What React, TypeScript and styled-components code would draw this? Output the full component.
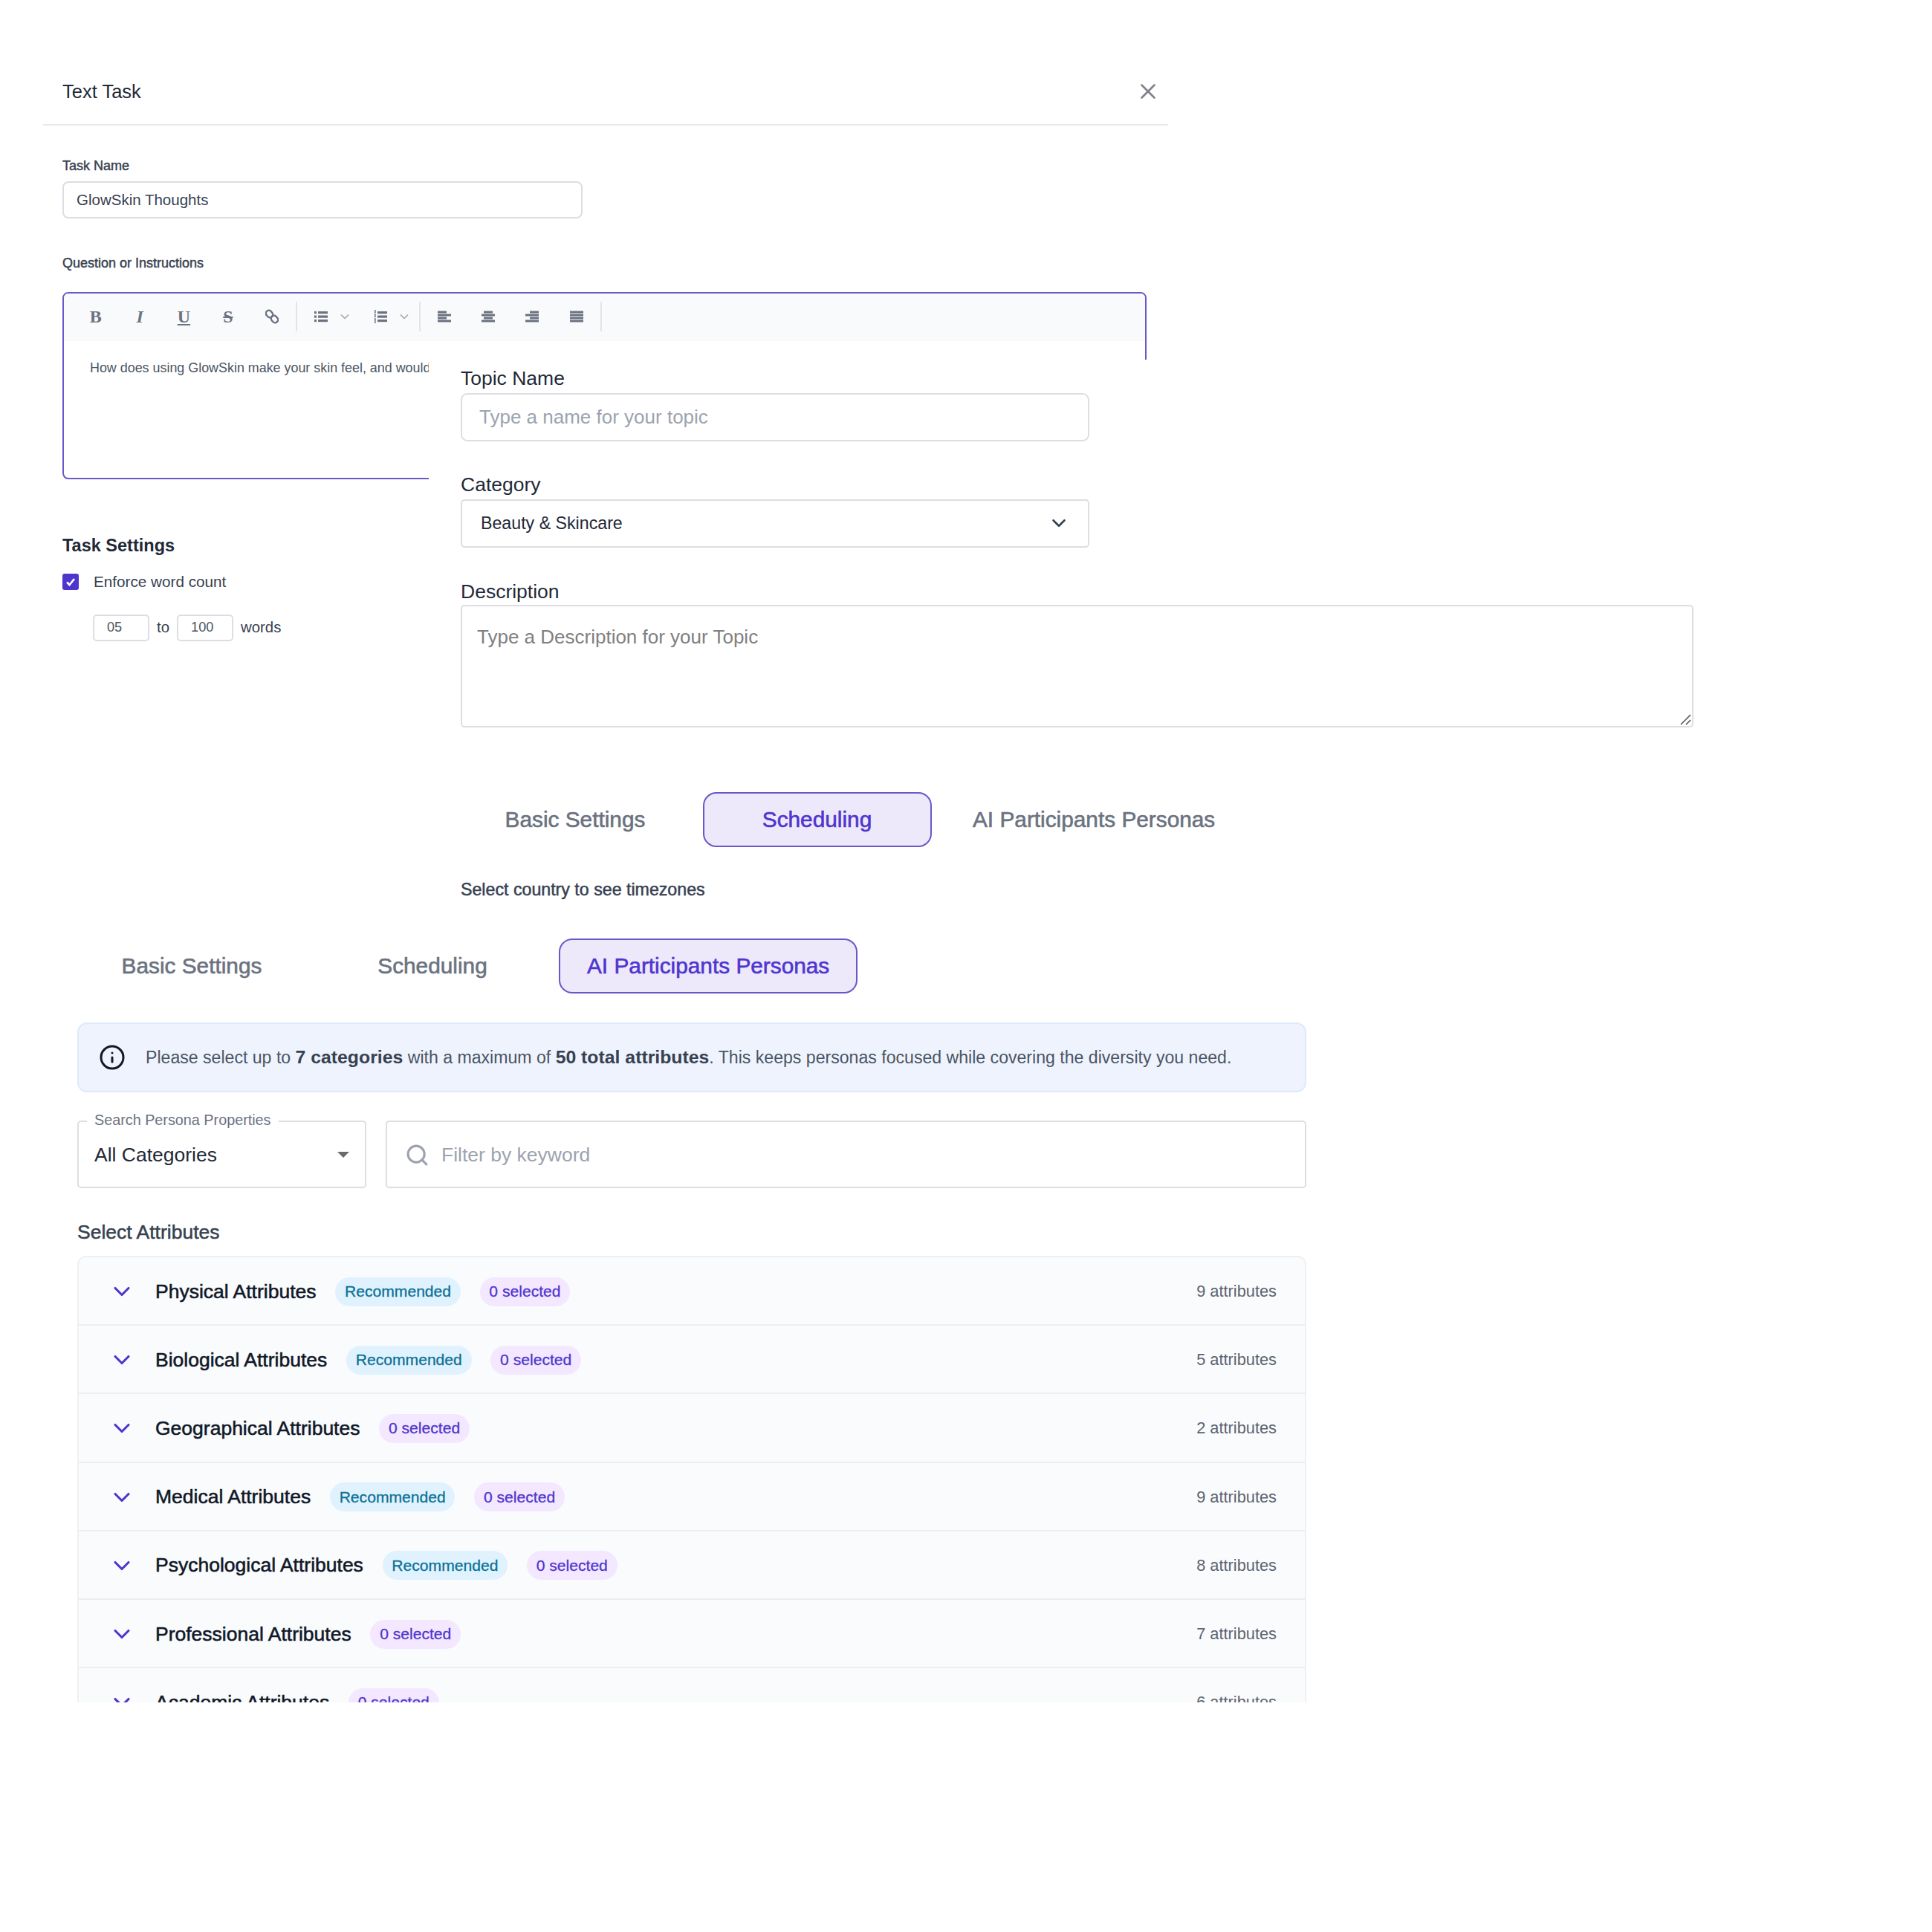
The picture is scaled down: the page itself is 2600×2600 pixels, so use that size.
import * as React from 'react'
import styled, { createGlobalStyle } from 'styled-components'
import { ChevronDown, Info, Search, X } from 'lucide-react'

const sans = `"Liberation Sans", Arial, sans-serif`

const GlobalStyle = createGlobalStyle`
  html, body {
    margin: 0;
    padding: 0;
    background: #ffffff;
    font-family: ${sans};
  }
  * {
    box-sizing: border-box;
  }
`

const Canvas = styled.div`
  position: relative;
  width: 2600px;
  height: 2600px;
  overflow: hidden;
  background: #ffffff;
  padding-top: 90px;
`

/* Text Task window */
const TaskWindow = styled.section`
  width: 1514px;
  height: 1150px;
  margin-left: 58px;
  background: #ffffff;
`

const TaskHeader = styled.header`
  display: flex;
  align-items: center;
  justify-content: space-between;
  height: 79px;
  padding: 0 10px 11px 26px;
  border-bottom: 2px solid #e8e9ec;
  font-size: 25.5px;
  color: #1f2937;
`

const CloseButton = styled.span`
  display: flex;
  color: #808389;
`

const TaskBody = styled.div`
  display: flex;
  flex-direction: column;
  padding: 0 29px 0 26px;
`

const SmallLabel = styled.div<{ $top: number }>`
  margin-top: ${({ $top }) => $top}px;
  font-size: 18px;
  line-height: 20px;
  -webkit-text-stroke: 0.45px currentColor;
  color: #374151;
`

const TaskNameInput = styled.div`
  width: 700px;
  height: 50px;
  margin-top: 11px;
  padding-left: 17px;
  display: flex;
  align-items: center;
  border: 2px solid #dcdee3;
  border-radius: 8px;
  font-size: 20.5px;
  color: #374151;
`

const Editor = styled.div`
  width: 1459px;
  height: 252px;
  margin-top: 29px;
  border: 2px solid #6a58c9;
  border-radius: 8px;
  overflow: hidden;
`

const EditorToolbar = styled.div`
  display: flex;
  align-items: center;
  height: 64px;
  padding: 0 0 2px 11px;
  background: #f9fafb;
  color: #6b7280;
`

const ToolGroup = styled.div`
  display: flex;
  align-items: center;
  height: 40px;
  padding: 0 2px;
  border-right: 2px solid #e2e4e8;
`

const ToolButton = styled.span<{ $wide?: boolean }>`
  display: flex;
  align-items: center;
  justify-content: ${({ $wide }) => ($wide ? 'flex-start' : 'center')};
  gap: 17px;
  width: ${({ $wide }) => ($wide ? '80px' : '59.4px')};
  padding-left: ${({ $wide }) => ($wide ? '21px' : '0')};
  font-family: "Liberation Serif", "Times New Roman", serif;
  font-size: 24px;
  font-weight: 700;
  line-height: 1;
`

const EditorText = styled.p`
  width: 491px;
  margin: 0;
  padding: 25px 0 0 35px;
  overflow: hidden;
  font-size: 17.9px;
  line-height: 22px;
  color: #4b5563;
  white-space: nowrap;
`

const SettingsTitle = styled.h3`
  margin: 75px 0 0;
  font-size: 23.5px;
  line-height: 28px;
  font-weight: 700;
  color: #1f2937;
`

const CheckRow = styled.label`
  display: flex;
  align-items: center;
  gap: 20px;
  margin-top: 23px;
  font-size: 20.7px;
  color: #374151;
`

const CheckBox = styled.span`
  display: flex;
  align-items: center;
  justify-content: center;
  width: 22px;
  height: 22px;
  border-radius: 3px;
  background: #4f35cf;
`

const RangeRow = styled.div`
  display: flex;
  align-items: center;
  gap: 10px;
  margin: 32px 0 0 41px;
  font-size: 20.4px;
  color: #374151;
`

const RangeInput = styled.span`
  display: flex;
  align-items: center;
  width: 76px;
  height: 36px;
  padding-left: 17px;
  border: 2px solid #dcdee3;
  border-radius: 5px;
  font-size: 18.2px;
  color: #4b5563;
`

/* Topic form and scheduling window, lies over the text task window */
const TopicWindow = styled.section`
  position: absolute;
  left: 577px;
  top: 484px;
  width: 1800px;
  height: 750px;
  padding: 0 0 0 43px;
  background: #ffffff;
`

const FieldLabel = styled.div<{ $top: number; $bottom: number }>`
  margin-top: ${({ $top }) => $top}px;
  margin-bottom: ${({ $bottom }) => $bottom}px;
  font-size: 26.5px;
  line-height: 30px;
  color: #1f2937;
`

const TextField = styled.div<{ $radius: number }>`
  display: flex;
  align-items: center;
  justify-content: space-between;
  width: 846px;
  height: 65px;
  padding: 0 24px 0 ${({ $radius }) => ($radius > 6 ? 23 : 25)}px;
  border: 2px solid #dcdee3;
  border-radius: ${({ $radius }) => $radius}px;
  font-size: ${({ $radius }) => ($radius > 6 ? 26 : 23.2)}px;
  color: ${({ $radius }) => ($radius > 6 ? '#9ca3af' : '#1f2937')};
`

const TextArea = styled.div`
  position: relative;
  width: 1659px;
  height: 165px;
  padding: 26px 0 0 20px;
  border: 2px solid #dcdee3;
  border-radius: 5px;
  font-size: 26px;
  line-height: 30px;
  color: #808080;
`

const ResizeGrip = styled.svg`
  position: absolute;
  right: 1px;
  bottom: 1px;
`

const TabRow = styled.div<{ $top: number; $gap: number }>`
  display: flex;
  gap: ${({ $gap }) => $gap}px;
  margin-top: ${({ $top }) => $top}px;
`

const Tab = styled.div<{ $active?: boolean }>`
  display: flex;
  align-items: center;
  justify-content: center;
  min-width: 308px;
  height: 74px;
  padding: 0 36px;
  border: 2px solid ${({ $active }) => ($active ? '#6a58c9' : 'transparent')};
  border-radius: 18px;
  background: ${({ $active }) => ($active ? '#ede9fb' : 'transparent')};
  font-size: 29.8px;
  -webkit-text-stroke: 0.6px currentColor;
  color: ${({ $active }) => ($active ? '#4f35cf' : '#6b7280')};
`

const CountryHint = styled.div`
  margin-top: 42.5px;
  font-size: 23.2px;
  line-height: 28px;
  -webkit-text-stroke: 0.5px currentColor;
  color: #374151;
`

/* AI personas window */
const PersonaWindow = styled.section`
  position: absolute;
  left: 104px;
  top: 1240px;
  width: 1654px;
  height: 1051px;
  padding-top: 23px;
  overflow: hidden;
  background: #ffffff;
`

const InfoBanner = styled.div`
  display: flex;
  align-items: center;
  gap: 27px;
  height: 94px;
  margin-top: 39px;
  padding-left: 27px;
  border: 2px solid #e0e9fb;
  border-radius: 13px;
  background: #eef3fe;
  font-size: 23.1px;
  color: #4b5563;

  svg {
    flex: none;
    color: #111827;
  }

  b {
    font-size: 24.8px;
    color: #374151;
  }
`

const SearchRow = styled.div`
  display: flex;
  gap: 26px;
  margin-top: 38px;
`

const OutlinedSelect = styled.div`
  position: relative;
  display: flex;
  align-items: center;
  justify-content: space-between;
  width: 389px;
  height: 91px;
  padding: 1px 21px 0;
  border: 2px solid #dcdee3;
  border-radius: 5px;
  font-size: 26.5px;
  color: #1f2937;
`

const FloatingLabel = styled.span`
  position: absolute;
  left: 11px;
  top: -14px;
  padding: 0 10px;
  background: #ffffff;
  font-size: 19.8px;
  line-height: 22px;
  color: #6b7280;
`

const Caret = styled.span`
  width: 0;
  height: 0;
  border-left: 8px solid transparent;
  border-right: 8px solid transparent;
  border-top: 8px solid #6b6b6b;
`

const KeywordField = styled.div`
  flex: 1;
  display: flex;
  align-items: center;
  gap: 16px;
  height: 91px;
  padding: 1px 0 0 24px;
  border: 2px solid #dcdee3;
  border-radius: 5px;
  font-size: 26.5px;
  color: #9ca3af;

  svg {
    color: #9ca3af;
  }
`

const SectionTitle = styled.h4`
  margin: 43px 0 0;
  font-size: 26.5px;
  line-height: 32px;
  font-weight: 400;
  -webkit-text-stroke: 0.5px currentColor;
  color: #374151;
`

const AttributeList = styled.div`
  margin-top: 16px;
  border: 2px solid #eef0f3;
  border-radius: 12px 12px 0 0;
  background: #f9fbfd;
`

const AttributeRow = styled.div`
  display: flex;
  align-items: center;
  height: 92.2px;
  padding: 2px 38px 0 40px;
  border-bottom: 2px solid #eceef1;
  color: #4f35cf;
`

const AttributeName = styled.span`
  margin: 0 25.7px 0 27px;
  font-size: 26.5px;
  -webkit-text-stroke: 0.55px currentColor;
  color: #111827;
`

const Badge = styled.span<{ $tone: 'blue' | 'purple' }>`
  display: flex;
  align-items: center;
  height: 39px;
  margin-right: 25.7px;
  padding: 0 12.8px;
  border-radius: 20px;
  background: ${({ $tone }) => ($tone === 'blue' ? '#e0f2fe' : '#f3e8ff')};
  font-size: 21.1px;
  -webkit-text-stroke: 0.3px currentColor;
  color: ${({ $tone }) => ($tone === 'blue' ? '#0b7196' : '#4f35cf')};
`

const AttributeCount = styled.span`
  margin-left: auto;
  font-size: 21.8px;
  color: #5b6370;
`

const LinkIcon = () => (
  <svg width="18" height="20" viewBox="0 0 18 20" fill="none" stroke="currentColor" strokeWidth="2.4">
    <rect x="1.5" y="1.5" width="8" height="10" rx="4" transform="rotate(-40 5.5 6.5)" />
    <rect x="8.5" y="8.5" width="8" height="10" rx="4" transform="rotate(-40 12.5 13.5)" />
  </svg>
)

const ListLines = ({ numbered }: { numbered?: boolean }) => (
  <svg width="18" height="18" viewBox="0 0 18 18" fill="currentColor">
    {[2, 7.5, 13].map((y) => (
      <g key={y}>
        {numbered ? (
          <rect x="1" y={y - 2} width="1.6" height="4.6" />
        ) : (
          <rect x="0" y={y} width="3" height="3.2" />
        )}
        <rect x="5" y={y} width="13" height="3.2" />
      </g>
    ))}
    {numbered && <rect x="1" y="15.5" width="1.6" height="2.5" />}
  </svg>
)

const SmallChevron = () => (
  <svg width="12" height="8" viewBox="0 0 12 8" fill="none" stroke="#9ca3af" strokeWidth="1.5">
    <path d="M1 1.5 L6 6.5 L11 1.5" />
  </svg>
)

const AlignIcon = ({ kind }: { kind: 'left' | 'center' | 'right' | 'justify' }) => {
  const widths = kind === 'justify' ? [18, 18, 18, 18] : [12, 18, 12, 18]
  return (
    <svg width="18" height="16" viewBox="0 0 18 16" fill="currentColor">
      {widths.map((w, i) => {
        let x = 0
        if (kind === 'center') x = (18 - w) / 2
        if (kind === 'right') x = 18 - w
        return <rect key={i} x={x} y={0.5 + i * 4} width={w} height="3" />
      })}
    </svg>
  )
}

const attributes = [
  { name: 'Physical Attributes', recommended: true, count: 9 },
  { name: 'Biological Attributes', recommended: true, count: 5 },
  { name: 'Geographical Attributes', recommended: false, count: 2 },
  { name: 'Medical Attributes', recommended: true, count: 9 },
  { name: 'Psychological Attributes', recommended: true, count: 8 },
  { name: 'Professional Attributes', recommended: false, count: 7 },
  { name: 'Academic Attributes', recommended: false, count: 6 },
]

const App: React.FC = () => (
  <Canvas>
    <GlobalStyle />

    <TaskWindow>
      <TaskHeader>
        Text Task
        <CloseButton>
          <X size={34} strokeWidth={1.9} />
        </CloseButton>
      </TaskHeader>
      <TaskBody>
        <SmallLabel $top={44}>Task Name</SmallLabel>
        <TaskNameInput>GlowSkin Thoughts</TaskNameInput>
        <SmallLabel $top={49.5}>Question or Instructions</SmallLabel>
        <Editor>
          <EditorToolbar>
            <ToolGroup>
              <ToolButton>B</ToolButton>
              <ToolButton><i>I</i></ToolButton>
              <ToolButton><u>U</u></ToolButton>
              <ToolButton><s>S</s></ToolButton>
              <ToolButton><LinkIcon /></ToolButton>
            </ToolGroup>
            <ToolGroup>
              <ToolButton $wide><ListLines /><SmallChevron /></ToolButton>
              <ToolButton $wide><ListLines numbered /><SmallChevron /></ToolButton>
            </ToolGroup>
            <ToolGroup>
              <ToolButton><AlignIcon kind="left" /></ToolButton>
              <ToolButton><AlignIcon kind="center" /></ToolButton>
              <ToolButton><AlignIcon kind="right" /></ToolButton>
              <ToolButton><AlignIcon kind="justify" /></ToolButton>
            </ToolGroup>
          </EditorToolbar>
          <EditorText>How does using GlowSkin make your skin feel, and would you recommend it?</EditorText>
        </Editor>
        <SettingsTitle>Task Settings</SettingsTitle>
        <CheckRow>
          <CheckBox>
            <svg width="16" height="16" viewBox="0 0 16 16" fill="none" stroke="#ffffff" strokeWidth="2.6">
              <path d="M3 8.5 L6.5 12 L13 4" />
            </svg>
          </CheckBox>
          Enforce word count
        </CheckRow>
        <RangeRow>
          <RangeInput>05</RangeInput>
          to
          <RangeInput>100</RangeInput>
          words
        </RangeRow>
      </TaskBody>
    </TaskWindow>

    <TopicWindow>
      <FieldLabel $top={10} $bottom={5}>Topic Name</FieldLabel>
      <TextField $radius={9}>Type a name for your topic</TextField>
      <FieldLabel $top={42.5} $bottom={5}>Category</FieldLabel>
      <TextField $radius={5}>
        Beauty &amp; Skincare
        <ChevronDown size={30} strokeWidth={2.1} color="#374151" />
      </TextField>
      <FieldLabel $top={44} $bottom={3.5}>Description</FieldLabel>
      <TextArea>
        Type a Description for your Topic
        <ResizeGrip width="18" height="18" viewBox="0 0 18 18" stroke="#555555" strokeWidth="1.6">
          <path d="M4 17 L17 4 M11 17 L17 11" />
        </ResizeGrip>
      </TextArea>
      <TabRow $top={87} $gap={17.5}>
        <Tab>Basic Settings</Tab>
        <Tab $active>Scheduling</Tab>
        <Tab>AI Participants Personas</Tab>
      </TabRow>
      <CountryHint>Select country to see timezones</CountryHint>
    </TopicWindow>

    <PersonaWindow>
      <TabRow $top={0} $gap={16}>
        <Tab>Basic Settings</Tab>
        <Tab>Scheduling</Tab>
        <Tab $active>AI Participants Personas</Tab>
      </TabRow>
      <InfoBanner>
        <Info size={36} strokeWidth={2} />
        <span>
          Please select up to <b>7 categories</b> with a maximum of <b>50 total attributes</b>. This keeps personas
          focused while covering the diversity you need.
        </span>
      </InfoBanner>
      <SearchRow>
        <OutlinedSelect>
          <FloatingLabel>Search Persona Properties</FloatingLabel>
          All Categories
          <Caret />
        </OutlinedSelect>
        <KeywordField>
          <Search size={33} strokeWidth={2.3} />
          Filter by keyword
        </KeywordField>
      </SearchRow>
      <SectionTitle>Select Attributes</SectionTitle>
      <AttributeList>
        {attributes.map((attribute) => (
          <AttributeRow key={attribute.name}>
            <ChevronDown size={36} strokeWidth={2.1} />
            <AttributeName>{attribute.name}</AttributeName>
            {attribute.recommended && <Badge $tone="blue">Recommended</Badge>}
            <Badge $tone="purple">0 selected</Badge>
            <AttributeCount>{attribute.count} attributes</AttributeCount>
          </AttributeRow>
        ))}
      </AttributeList>
    </PersonaWindow>
  </Canvas>
)

export default App
